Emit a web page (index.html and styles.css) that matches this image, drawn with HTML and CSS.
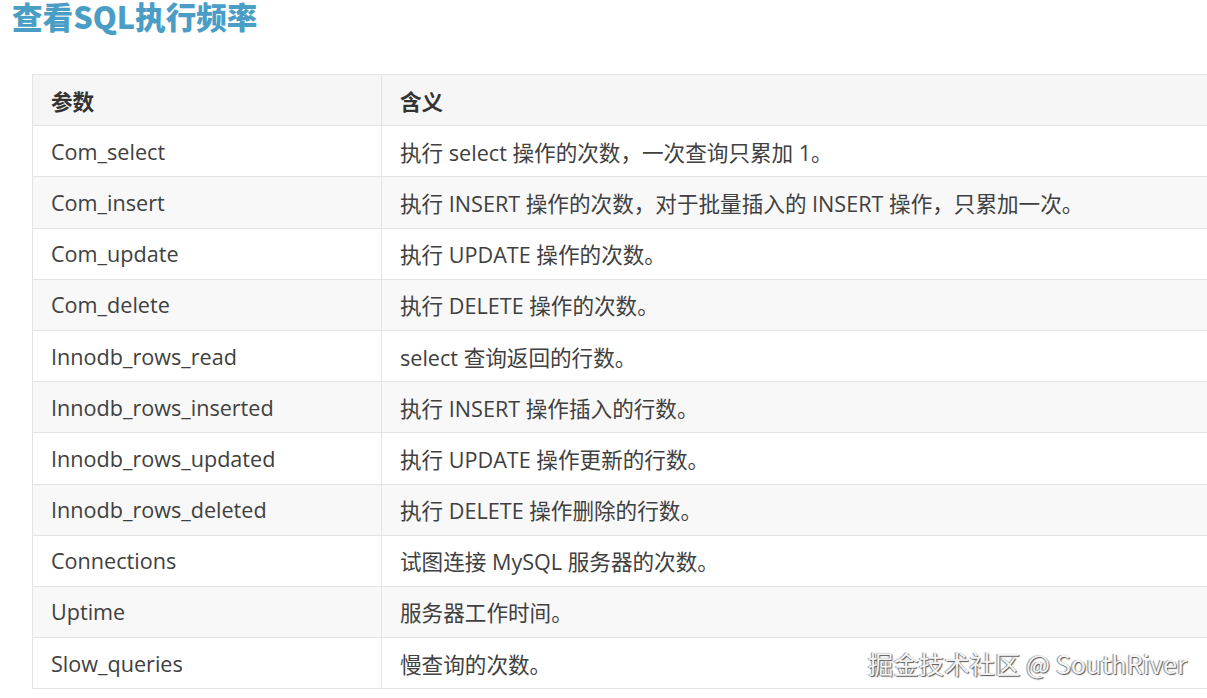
FILE: index.html
```html
<!DOCTYPE html>
<html lang="zh-CN">
<head>
<meta charset="utf-8">
<title>查看SQL执行频率</title>
<link rel="stylesheet" href="styles.css">
</head>
<body>
<div class="page">
  <h1 class="title">查看SQL执行频率</h1>
  <table class="params">
    <thead>
      <tr><th class="col-name">参数</th><th>含义</th></tr>
    </thead>
    <tbody>
      <tr><td>Com_select</td><td>执行 select 操作的次数，一次查询只累加 1。</td></tr>
      <tr><td>Com_insert</td><td>执行 INSERT 操作的次数，对于批量插入的 INSERT 操作，只累加一次。</td></tr>
      <tr><td>Com_update</td><td>执行 UPDATE 操作的次数。</td></tr>
      <tr><td>Com_delete</td><td>执行 DELETE 操作的次数。</td></tr>
      <tr><td>Innodb_rows_read</td><td>select 查询返回的行数。</td></tr>
      <tr><td>Innodb_rows_inserted</td><td>执行 INSERT 操作插入的行数。</td></tr>
      <tr><td>Innodb_rows_updated</td><td>执行 UPDATE 操作更新的行数。</td></tr>
      <tr><td>Innodb_rows_deleted</td><td>执行 DELETE 操作删除的行数。</td></tr>
      <tr><td>Connections</td><td>试图连接 MySQL 服务器的次数。</td></tr>
      <tr><td>Uptime</td><td>服务器工作时间。</td></tr>
      <tr><td>Slow_queries</td><td>慢查询的次数。</td></tr>
    </tbody>
  </table>
  <div class="watermark">掘金技术社区 @ SouthRiver</div>
</div>
</body>
</html>
```
FILE: styles.css
```css
html, body {
  margin: 0;
  padding: 0;
  background: #ffffff;
  overflow: hidden;
}
.page {
  position: relative;
  width: 1207px;
  height: 698px;
  overflow: hidden;
}
.title {
  margin: 0;
  padding: 0 0 0 12px;
  font-family: "Noto Sans CJK SC", sans-serif;
  font-weight: 900;
  font-size: 30.6px;
  line-height: 32px;
  color: #4a9ec6;
}
.params {
  margin: 42px 0 0 32px;
  border-collapse: collapse;
  width: 1260px;
  font-family: "Open Sans", "Noto Sans CJK SC", sans-serif;
  font-size: 21.6px;
  color: #404040;
  table-layout: fixed;
}
.params th, .params td {
  border: 1px solid #e4e4e4;
  height: 51.2px;
  padding: 0 18px;
  text-align: left;
  vertical-align: middle;
  white-space: nowrap;
  box-sizing: border-box;
}
.params .col-name {
  width: 349px;
}
.params th {
  background: #f6f6f6;
  font-weight: 700;
  font-family: "Noto Sans CJK SC", sans-serif;
  color: #333;
}
.params tbody tr:nth-child(even) td {
  background: #f8f8f8;
}
.watermark {
  position: absolute;
  left: 868px;
  top: 646px;
  font-family: "Noto Sans CJK SC", sans-serif;
  font-size: 25.4px;
  line-height: 34px;
  color: #f4f4f4;
  text-shadow: 1px 1px 1px #555, -1px 0 1px #888;
  white-space: nowrap;
}
```
